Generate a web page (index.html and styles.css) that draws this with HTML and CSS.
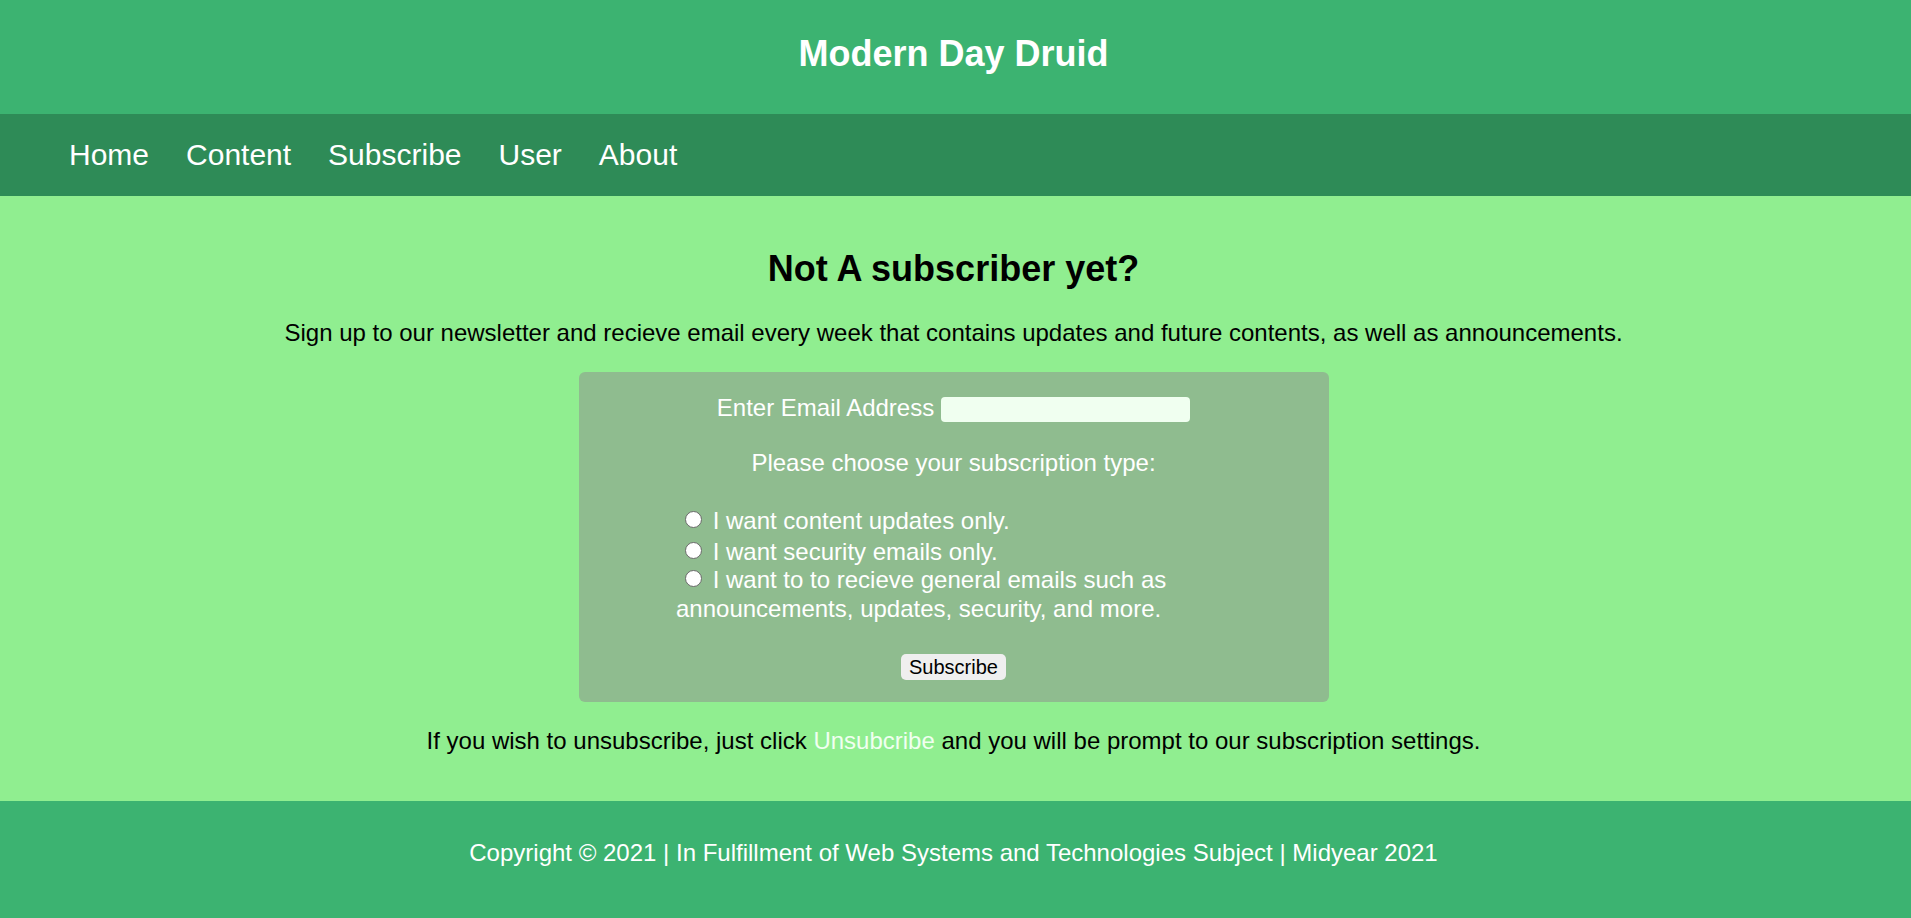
FILE: index.html
```html
<!DOCTYPE html>
<html lang="en">
<head>
<meta charset="utf-8">
<title>Modern Day Druid</title>
<link rel="stylesheet" href="styles.css">
</head>
<body>
<header class="site-header">
  <h1 class="site-title">Modern Day Druid</h1>
</header>
<nav class="site-nav">
  <a class="nav-link" href="#">Home</a>
  <a class="nav-link" href="#">Content</a>
  <a class="nav-link" href="#">Subscribe</a>
  <a class="nav-link" href="#">User</a>
  <a class="nav-link" href="#">About</a>
</nav>
<main class="main">
  <h2 class="heading">Not A subscriber yet?</h2>
  <p class="intro">Sign up to our newsletter and recieve email every week that contains updates and future contents, as well as announcements.</p>
  <form class="sub-form">
    <div class="email-row">
      <label class="email-label" for="email">Enter Email Address</label>
      <input class="email-input" type="email" id="email">
    </div>
    <p class="choose">Please choose your subscription type:</p>
    <div class="options">
      <div class="option option-first"><input class="radio" type="radio" name="type"> I want content updates only.</div>
      <div class="option"><input class="radio" type="radio" name="type"> I want security emails only.</div>
      <div class="option"><input class="radio" type="radio" name="type"> I want to to recieve general emails such as announcements, updates, security, and more.</div>
    </div>
    <div class="submit-row"><button class="submit-btn" type="button">Subscribe</button></div>
  </form>
  <p class="unsub">If you wish to unsubscribe, just click <a class="unsub-link" href="#">Unsubcribe</a> and you will be prompt to our subscription settings.</p>
</main>
<footer class="site-footer">
  <p class="footer-text">Copyright © 2021 | In Fulfillment of Web Systems and Technologies Subject | Midyear 2021</p>
</footer>
</body>
</html>
```

FILE: styles.css
```css
html, body {
  margin: 0;
  padding: 0;
}

body {
  font-family: "Liberation Sans", Arial, sans-serif;
  font-size: 24px;
  line-height: 28px;
  color: #000;
  background: #90EE90;
}

.site-header {
  background: #3CB371;
  padding: 33px 4px 40px 0;
  text-align: center;
}

.site-title {
  margin: 0;
  font-size: 36px;
  line-height: 41px;
  font-weight: bold;
  color: #fff;
}

.site-nav {
  background: #2E8B57;
  display: flex;
  gap: 37px;
  padding: 24px 0 24px 69px;
}

.nav-link {
  color: #fff;
  text-decoration: none;
  font-size: 30px;
  line-height: 34px;
}

.main {
  background: #90EE90;
  text-align: center;
  padding: 52.3px 4px 46.3px 0;
}

.heading {
  margin: 0;
  font-size: 36px;
  line-height: 41px;
  font-weight: bold;
}

.intro {
  margin: 30.1px 0 0;
}

.sub-form {
  width: 750px;
  margin: 24.6px auto 0;
  box-sizing: border-box;
  background: #8FBC8F;
  border-radius: 6px;
  padding: 22.4px 0 22px;
  color: #fff;
}

.email-row {
  display: flex;
  justify-content: center;
  align-items: center;
  gap: 7px;
  height: 28px;
}

.email-input {
  width: 249px;
  height: 25px;
  box-sizing: border-box;
  margin: 3px 0 0;
  border: none;
  border-radius: 4px;
  background: #F0FFF0;
  padding: 0 4px;
}

.choose {
  margin: 27px 0 0;
}

.options {
  width: 555px;
  margin: 30.1px auto 0;
  text-align: left;
  line-height: 28.3px;
}

.option-first {
  margin-bottom: 2.4px;
}

.radio {
  -webkit-appearance: none;
  appearance: none;
  box-sizing: border-box;
  width: 17px;
  height: 17px;
  margin: 0 4px 0 9px;
  border: 1.5px solid #6a6a6a;
  border-radius: 50%;
  background: #fff;
  vertical-align: 1px;
}

.submit-row {
  margin-top: 30.9px;
  height: 26px;
}

.submit-btn {
  font-family: "Liberation Sans", Arial, sans-serif;
  font-size: 20px;
  line-height: 26px;
  height: 26px;
  padding: 0 8.5px;
  border: none;
  border-radius: 5px;
  background: #EFEFEF;
  color: #000;
  vertical-align: top;
}

.unsub {
  margin: 24.7px 0 0;
}

.unsub-link {
  color: #F0FFF0;
  text-decoration: none;
}

.site-footer {
  background: #3CB371;
  padding: 38.4px 4px 50.6px 0;
  text-align: center;
  color: #fff;
}

.footer-text {
  margin: 0;
}
```
